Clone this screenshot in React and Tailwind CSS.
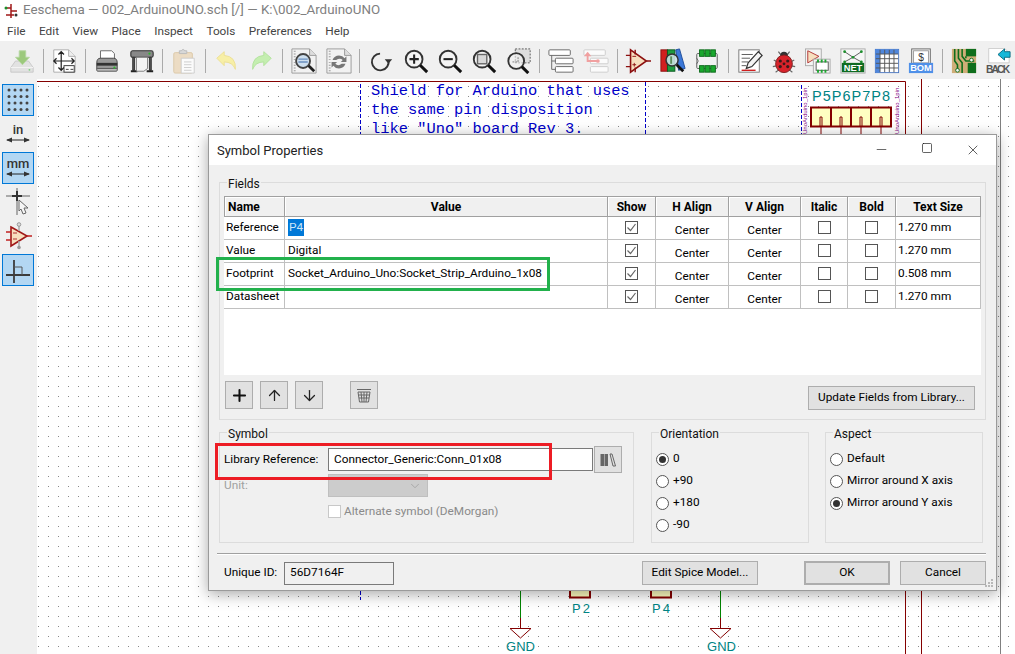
import { Minus, Square, X, Plus, ArrowUp, ArrowDown, ChevronDown } from 'lucide-react';

const ui = "font-['Roboto','Noto_Sans',sans-serif]";

const Svg = ({ children }) => (
  <svg width="28" height="28" viewBox="0 0 28 28" fill="none">{children}</svg>
);

const SaveIcon = () => (
  <Svg>
    <path d="M2 21 L7 14 H21 L26 21 V26 H2 Z" fill="#e2e2e2" stroke="#c8c8c8" />
    <path d="M2 21 H26" stroke="#f4f4f4" />
    <circle cx="22" cy="23.5" r="1" fill="#7fd07f" />
    <path d="M11 3 H18 V10 H22 L14.5 18 L7 10 H11 Z" fill="#9cc97c" stroke="#b5d6a0" />
  </Svg>
);
const PageIcon = () => (
  <Svg>
    <path d="M3 2 H19 L26 9 V26 H3 Z" fill="#fff" stroke="#aaa" />
    <path d="M19 2 V9 H26" fill="#eee" stroke="#aaa" />
    <path d="M11 4 V24 M3 14 H25 M8 7 L11 4 L14 7 M8 21 L11 24 L14 21 M6 11 L3 14 L6 17 M22 11 L25 14 L22 17" stroke="#222" strokeWidth="1.3" />
    <rect x="14" y="19" width="11" height="7" fill="#fff" stroke="#333" />
    <path d="M16 23 H19 M21 23 H24" stroke="#333" />
  </Svg>
);
const PrintIcon = () => (
  <Svg>
    <path d="M7 3 H19 L22 6 V12 H7 Z" fill="#fff" stroke="#666" />
    <path d="M3 16 Q3 11 7 11 H21 Q25 11 25 16 V23 H3 Z" fill="#9a9a9a" stroke="#444" />
    <rect x="3" y="16" width="22" height="3" fill="#333" />
    <rect x="3" y="22" width="22" height="3" rx="1" fill="#bbb" stroke="#555" />
    <circle cx="22" cy="21" r="1.2" fill="#2fb52f" />
  </Svg>
);
const PlotIcon = () => (
  <Svg>
    <rect x="2" y="3" width="24" height="7" rx="2" fill="#888" stroke="#333" strokeWidth="1.2" />
    <circle cx="22" cy="6" r="1.2" fill="#2fb52f" />
    <path d="M4 10 H6 V24 H4 Z M22 10 H24 V24 H22 Z" fill="#555" stroke="#333" />
    <path d="M2 25 H9 M19 25 H26" stroke="#222" strokeWidth="2" />
    <path d="M8 10 H20 V22 L16 25 H8 Z" fill="#f4f4f4" stroke="#777" />
  </Svg>
);
const PasteIcon = () => (
  <Svg>
    <rect x="3" y="5" width="20" height="22" rx="1.5" fill="#ecdcc4" stroke="#dcc8a8" />
    <path d="M9 6 V3 H11 Q13 0 15 3 H17 V6 Z" fill="#d8d8d8" stroke="#bbb" />
    <path d="M11 11 H25 V27 H11 Z" fill="#fbfbfb" stroke="#ccc" />
    <path d="M14 15 H22 M14 18 H22 M14 21 H22 M14 24 H22" stroke="#ccc" />
  </Svg>
);
const UndoIcon = () => (
  <Svg>
    <path d="M3 11 L11 4 V8 Q24 9 23 23 Q20 15 11 15 V19 Z" fill="#f7efa6" stroke="#ecdf95" />
  </Svg>
);
const RedoIcon = () => (
  <Svg>
    <path d="M25 11 L17 4 V8 Q4 9 5 23 Q8 15 17 15 V19 Z" fill="#c4eeb0" stroke="#b2e29c" />
  </Svg>
);
const DocBg = () => (
  <>
    <path d="M1 1 H20 L27 8 V27 H1 Z" fill="#f2f2f2" stroke="#999" />
    <path d="M4 3 V25" stroke="#999" strokeDasharray="1 2" strokeWidth="2" />
    <path d="M20 1 V8 H27" fill="#ddd" stroke="#999" />
  </>
);
const FindDocIcon = () => (
  <Svg>
    <DocBg />
    <circle cx="13" cy="14" r="7.5" fill="#cfe0ef" stroke="#444" strokeWidth="2" />
    <path d="M8 12 H18 M8 15 H18" stroke="#6b8fc0" strokeWidth="1.5" />
    <path d="M19 19 L25 25" stroke="#222" strokeWidth="3" />
  </Svg>
);
const RefreshDocIcon = () => (
  <Svg>
    <DocBg />
    <path d="M7 13 Q9 8 14 8 Q18 8 20 11 L22 9 V15 H16 L18 13 Q15 10 11 13 Z" fill="#777" />
    <path d="M21 17 Q19 22 14 22 Q10 22 8 19 L6 21 V15 H12 L10 17 Q13 20 17 17 Z" fill="#777" />
  </Svg>
);
const RotateIcon = () => (
  <Svg>
    <path d="M22 13 A9 9 0 1 1 13 6" stroke="#333" strokeWidth="2" />
    <path d="M18 12 H26 L22 17 Z" fill="#333" />
  </Svg>
);
const Lens = ({ children }) => (
  <Svg>
    <circle cx="12" cy="12" r="9" fill="#f4f4f4" stroke="#333" strokeWidth="2" />
    {children}
    <path d="M18.5 18.5 L26 26" stroke="#111" strokeWidth="3.2" />
  </Svg>
);
const ZoomInIcon = () => <Lens><path d="M7 12 H17 M12 7 V17" stroke="#222" strokeWidth="2.2" /></Lens>;
const ZoomOutIcon = () => <Lens><path d="M7 12 H17" stroke="#222" strokeWidth="2.2" /></Lens>;
const ZoomFitIcon = () => <Lens><rect x="7" y="7" width="10" height="10" fill="#d8d8d8" stroke="#666" strokeWidth="1.5" /></Lens>;
const ZoomAreaIcon = () => (
  <Svg>
    <rect x="10" y="1" width="16" height="15" fill="#ddd" stroke="#555" strokeDasharray="2 1.5" />
    <circle cx="11" cy="14" r="8.5" fill="#f2f2f2" fillOpacity="0.6" stroke="#333" strokeWidth="2" />
    <path d="M7 15 H13 V10" stroke="#777" strokeDasharray="2 1" />
    <path d="M17 20 L24 27" stroke="#111" strokeWidth="3.2" />
  </Svg>
);
const HierIcon = () => (
  <Svg>
    <rect x="1" y="2" width="23" height="6" rx="1" fill="#fff" stroke="#666" />
    <rect x="8" y="11" width="19" height="6" rx="1" fill="#fff" stroke="#666" />
    <rect x="8" y="20" width="19" height="6" rx="1" fill="#fff" stroke="#666" />
    <path d="M4 8 V23 H8 M4 14 H8" stroke="#666" />
  </Svg>
);
const LeaveIcon = () => (
  <Svg>
    <rect x="1" y="2" width="23" height="6" rx="1" fill="#fbfbfb" stroke="#ccc" />
    <rect x="8" y="11" width="19" height="6" rx="1" fill="#fbfbfb" stroke="#ccc" />
    <rect x="8" y="20" width="19" height="6" rx="1" fill="#fbfbfb" stroke="#ccc" />
    <path d="M5 7 V14 H15" stroke="#f0a0a0" strokeWidth="2" />
    <path d="M1 9 L5 4 L9 9 Z" fill="#f0a0a0" />
    <circle cx="16" cy="14" r="2" fill="#f0a0a0" />
  </Svg>
);
const OpampIcon = () => (
  <Svg>
    <path d="M6 2 L23 14 L6 26 Z" fill="#f7dfbf" stroke="#8c1010" strokeWidth="1.7" />
    <path d="M1 8 H6 M1 20 H6 M23 14 H28 M11 7 V2 M11 21 V26" stroke="#8c1010" strokeWidth="1.5" />
    <path d="M8 9 H12 M8 18 H12 M10 16 V20" stroke="#8c1010" />
  </Svg>
);
const LibIcon = () => (
  <Svg>
    <rect x="1" y="2" width="7" height="23" fill="#d11f1f" stroke="#8c1010" />
    <rect x="8" y="2" width="8" height="23" fill="#1e9c3e" stroke="#0b5a1f" />
    <path d="M17 2 L21 1 L27 22 L20 24 Z" fill="#3b78d8" stroke="#1d4b99" />
    <circle cx="13" cy="13" r="6.5" fill="#d7e6ef" fillOpacity="0.85" stroke="#333" strokeWidth="1.6" />
    <path d="M12 9 V17" stroke="#5c8d5c" strokeWidth="2" />
    <path d="M18 18 L25 25" stroke="#111" strokeWidth="3" />
  </Svg>
);
const FpIcon = () => (
  <Svg>
    <rect x="3" y="6" width="22" height="16" rx="1" fill="#f2f2f2" stroke="#555" />
    <path d="M3 11 Q6 14 3 17" fill="#f0f0f0" stroke="#555" />
    <rect x="6" y="2" width="5" height="7" fill="#1aa82e" stroke="#0c6a1a" />
    <rect x="12" y="2" width="5" height="7" fill="#1aa82e" stroke="#0c6a1a" />
    <rect x="18" y="2" width="5" height="7" fill="#1aa82e" stroke="#0c6a1a" />
    <rect x="6" y="19" width="5" height="7" fill="#1aa82e" stroke="#0c6a1a" />
    <rect x="12" y="19" width="5" height="7" fill="#1aa82e" stroke="#0c6a1a" />
    <rect x="18" y="19" width="5" height="7" fill="#1aa82e" stroke="#0c6a1a" />
  </Svg>
);
const AnnotIcon = () => (
  <Svg>
    <rect x="2" y="2" width="22" height="24" fill="#fff" stroke="#777" />
    <path d="M5 7 H17 M5 11 H14 M5 15 H12 M5 19 H10" stroke="#555" />
    <path d="M5 24 H20" stroke="#d02020" strokeWidth="1.5" />
    <path d="M10 22 L12 16 L23 4 L27 8 L16 20 Z" fill="#f4f4f4" stroke="#333" strokeWidth="1.3" />
  </Svg>
);
const BugIcon = () => (
  <Svg>
    <path d="M8 4 L11 8 M20 4 L17 8 M3 13 L7 15 M25 13 L21 15 M2 20 L7 19 M26 20 L21 19 M5 26 L9 23 M23 26 L19 23" stroke="#666" strokeWidth="1.3" />
    <circle cx="14" cy="8" r="4" fill="#333" />
    <ellipse cx="14" cy="17" rx="9" ry="9.5" fill="#d8222a" stroke="#7c2020" />
    <circle cx="10" cy="14" r="1.7" fill="#3a1a1a" />
    <circle cx="18" cy="14" r="1.7" fill="#3a1a1a" />
    <circle cx="10" cy="20" r="1.7" fill="#3a1a1a" />
    <circle cx="18" cy="20" r="1.7" fill="#3a1a1a" />
    <circle cx="14" cy="17" r="1.5" fill="#3a1a1a" />
  </Svg>
);
const SymFpIcon = () => (
  <Svg>
    <rect x="0.5" y="1" width="17" height="18" fill="#f4f4f4" stroke="#aaa" />
    <path d="M3 3 L15 9 L3 16 Z" fill="#f7dfbf" stroke="#b03030" />
    <rect x="9" y="12" width="18" height="15" fill="#f4f4f4" stroke="#aaa" />
    <rect x="12" y="15" width="13" height="9" fill="#fff" stroke="#555" />
    <path d="M13 14 H15 M17 14 H19 M21 14 H23 M13 25 H15 M17 25 H19 M21 25 H23" stroke="#1aa82e" strokeWidth="3" />
  </Svg>
);
const NetIcon = () => (
  <Svg>
    <rect x="1" y="1" width="26" height="26" fill="#f6f6f6" stroke="#aaa" />
    <path d="M5 4 L14 10 L23 4 M5 15 L14 10 L23 15" stroke="#555" />
    <circle cx="5" cy="4" r="1.5" fill="#1c8f2c" />
    <circle cx="23" cy="4" r="1.5" fill="#1c8f2c" />
    <circle cx="14" cy="10" r="1.5" fill="#1c8f2c" />
    <circle cx="5" cy="15" r="1.5" fill="#1c8f2c" />
    <circle cx="23" cy="15" r="1.5" fill="#1c8f2c" />
    <rect x="2" y="16" width="24" height="10" fill="#0f6b22" />
    <text x="14" y="25" textAnchor="middle" fontSize="10" fontWeight="700" fill="#fff" fontFamily="Liberation Sans">NET</text>
  </Svg>
);
const GridIcon = () => (
  <Svg>
    <rect x="1.5" y="1.5" width="25" height="25" fill="#fff" stroke="#4a76c0" />
    <rect x="1.5" y="1.5" width="25" height="5" fill="#4f86dc" />
    <rect x="1.5" y="1.5" width="5" height="25" fill="#4f86dc" />
    <path d="M6.5 2 V26 M11.5 2 V26 M16.5 2 V26 M21.5 2 V26 M2 6.5 H26 M2 11.5 H26 M2 16.5 H26 M2 21.5 H26" stroke="#555" />
  </Svg>
);
const BomIcon = () => (
  <Svg>
    <rect x="4" y="1" width="20" height="17" fill="#f4f4f4" stroke="#666" />
    <rect x="6" y="3" width="16" height="13" fill="#fff" stroke="#999" />
    <text x="14" y="14" textAnchor="middle" fontSize="11" fill="#333" fontFamily="Liberation Sans">$</text>
    <rect x="1" y="16" width="26" height="11" fill="#4f90e8" />
    <text x="14" y="25" textAnchor="middle" fontSize="10" fontWeight="700" fill="#fff" fontFamily="Liberation Sans">BOM</text>
  </Svg>
);
const PcbIcon = () => (
  <Svg>
    <rect x="1" y="1" width="26" height="26" fill="#cfae78" />
    <rect x="16" y="1" width="11" height="8" fill="#0f6e1c" />
    <rect x="18" y="16" width="9" height="11" fill="#0f6e1c" />
    <path d="M4 1 V14 L7 18 V23 M8 1 V11 L12 16 V27 M12 1 V9 L16 14 H25 M16 9 V11" stroke="#0f6e1c" strokeWidth="1.7" />
    <circle cx="7" cy="24" r="2" fill="#f4f4f4" stroke="#0f6e1c" />
    <circle cx="22" cy="13" r="2" fill="#f4f4f4" stroke="#0f6e1c" />
  </Svg>
);
const BackIcon = () => (
  <Svg>
    <path d="M4 0.5 H21 L26 5 V16 H4 Z" fill="#fff" stroke="#ccc" />
    <path d="M14 7 L21 1 V4 H27 V10 H21 V13 Z" fill="#16b8d8" stroke="#0a6a80" />
    <text x="1" y="27" textLength="26" fontSize="11" fontWeight="700" fill="#555" fontFamily="Liberation Sans">BACK</text>
  </Svg>
);

const Tool = ({ children }) => (
  <div className="w-[34.3px] h-[28px] flex items-center justify-center shrink-0">
    <div className="scale-[0.93]">{children}</div>
  </div>
);
const Sep = () => (
  <div className="w-[8.5px] flex justify-center shrink-0">
    <div className="w-px h-[24px] bg-[#aaaaaa]" />
  </div>
);

const TopToolbar = () => (
  <div className="h-[38px] bg-[#f0f0f0] flex items-center pl-[4.5px] pt-[2px]">
    <Tool><SaveIcon /></Tool><Sep />
    <Tool><PageIcon /></Tool><Sep />
    <Tool><PrintIcon /></Tool><Tool><PlotIcon /></Tool><Sep />
    <Tool><PasteIcon /></Tool><Sep />
    <Tool><UndoIcon /></Tool><Tool><RedoIcon /></Tool><Sep />
    <Tool><FindDocIcon /></Tool><Tool><RefreshDocIcon /></Tool><Sep />
    <Tool><RotateIcon /></Tool><Tool><ZoomInIcon /></Tool><Tool><ZoomOutIcon /></Tool><Tool><ZoomFitIcon /></Tool><Tool><ZoomAreaIcon /></Tool><Sep />
    <Tool><HierIcon /></Tool><Tool><LeaveIcon /></Tool><Sep />
    <Tool><OpampIcon /></Tool><Tool><LibIcon /></Tool><Tool><FpIcon /></Tool><Sep />
    <Tool><AnnotIcon /></Tool><Tool><BugIcon /></Tool><Tool><SymFpIcon /></Tool><Tool><NetIcon /></Tool><Tool><GridIcon /></Tool><Tool><BomIcon /></Tool><Sep />
    <Tool><PcbIcon /></Tool><Tool><BackIcon /></Tool>
  </div>
);

const SideBtn = ({ active, children }) => (
  <div className={active
    ? 'w-8 h-8 flex items-center justify-center bg-[#b3d7f3] border border-[#0078d7]'
    : 'w-8 h-8 flex items-center justify-center'}>
    {children}
  </div>
);

const UnitGlyph = ({ label }) => (
  <svg className="overflow-visible" width="28" height="24" viewBox="0 0 28 24">
    <text x="14" y="12" textAnchor="middle" fontSize="13" fontWeight="500" fill="#333" fontFamily="Roboto">{label}</text>
    <path d="M3 18 H25" stroke="#222" />
    <path d="M2 18 L8 15.5 V20.5 Z M26 18 L20 15.5 V20.5 Z" fill="#333" />
  </svg>
);

const LeftToolbar = () => (
  <div className="w-[37px] bg-[#f0f0f0] flex flex-col gap-0.5 pl-[2px] pt-[5px] shrink-0">
    <SideBtn active>
      <svg width="24" height="24" viewBox="0 0 24 24" fill="#444">
        {[2, 8.5, 15, 21.5].map((y) =>
          [3, 9, 15, 21].map((x) => <circle key={`${x}-${y}`} cx={x} cy={y} r="1.5" />)
        )}
      </svg>
    </SideBtn>
    <SideBtn><UnitGlyph label="in" /></SideBtn>
    <SideBtn active><UnitGlyph label="mm" /></SideBtn>
    <SideBtn>
      <svg width="28" height="30" viewBox="0 0 28 30">
        <path d="M2 9 H26 M13 1 V28" stroke="#aaa" strokeWidth="2" />
        <path d="M8 9 H18 M13 4 V14" stroke="#333" strokeWidth="2" />
        <path d="M15 13 L24 21 L20 21 L22 26 L19 27 L17 22 L15 24 Z" fill="#f6f6f6" stroke="#666" />
      </svg>
    </SideBtn>
    <SideBtn>
      <svg width="28" height="28" viewBox="0 0 28 28">
        <path d="M7 5 L23 14 L7 24 Z" fill="#f7dfbf" stroke="#a01818" strokeWidth="1.6" />
        <path d="M2 10 H7 M2 18 H7 M23 14 H28" stroke="#c02020" strokeWidth="1.5" />
        <path d="M15 3 V9 M15 19 V25" stroke="#aaa" strokeWidth="1.5" />
        <circle cx="15" cy="2.5" r="1.8" fill="#ddd" stroke="#999" />
        <circle cx="15" cy="25.5" r="1.8" fill="#999" />
        <path d="M9 11 H13 M9 17 H13" stroke="#b03030" />
      </svg>
    </SideBtn>
    <SideBtn active>
      <svg width="26" height="26" viewBox="0 0 26 26" fill="none">
        <path d="M1 18 H25 M9 3 V26" stroke="#3c3c3c" strokeWidth="1.8" />
        <path d="M9 10 H17 V18" stroke="#555" />
      </svg>
    </SideBtn>
  </div>
);

const Schematic = () => {
  const maroon = '#840000';
  const teal = '#008484';
  return (
    <svg className="absolute inset-0" width="978" height="575" viewBox="37 79 978 575" fill="none">
      <path d="M37 81.5 H905.5 V135 M905.5 591 V654 M921.5 79 V135 M921.5 591 V654" stroke={maroon} />
      <path d="M1000.5 79 V654" stroke="#808080" />
      <path d="M360.5 84 V135 M360.5 591 V600 M645.5 82 V135 M801.5 85 V135" stroke="#0000c8" strokeDasharray="4 2" />
      <g fontFamily="Liberation Mono" fontSize="15.4" fill="#0000c8">
        <text x="371" y="95">Shield for Arduino that uses</text>
        <text x="371" y="114">the same pin disposition</text>
        <text x="371" y="133">like "Uno" board Rev 3.</text>
      </g>
      <text x="812" y="101" fontFamily="Liberation Sans" fontSize="14.5" fill={teal} textLength="78">P5P6P7P8</text>
      <rect x="811" y="107.5" width="80" height="19" fill="#ffffc2" stroke={maroon} strokeWidth="2" />
      <path d="M831 107 V127 M851 107 V127 M871 107 V127" stroke={maroon} strokeWidth="2" />
      <path d="M820 127 V117 H822 V127 M840 127 V117 H842 V127 M860 127 V117 H862 V127 M880 127 V117 H882 V127" stroke={maroon} />
      <path d="M821 127 V135 M841 127 V135 M861 127 V135 M881 127 V135" stroke={maroon} />
      <g fontFamily="Liberation Sans" fontSize="6" fill="#840084">
        <text transform="translate(807 134) rotate(-90)">UnoArduino_1pin</text>
        <text transform="translate(899 134) rotate(-90)">UnoArduino_1pin</text>
      </g>
      <rect x="570" y="588" width="20" height="9.5" fill="#ffffc2" stroke={maroon} strokeWidth="2" />
      <rect x="651" y="588" width="20" height="9.5" fill="#ffffc2" stroke={maroon} strokeWidth="2" />
      <g fontFamily="Liberation Sans" fontSize="13" fill={teal}>
        <text x="572" y="613" textLength="18">P2</text>
        <text x="652" y="613" textLength="18">P4</text>
        <text x="506" y="651" textLength="29">GND</text>
        <text x="707" y="651" textLength="29">GND</text>
      </g>
      <path d="M520.5 591 V618 M720.5 591 V618" stroke="#008400" />
      <path d="M520.5 618 V628 M720.5 618 V628 M510 628.5 H531 L520.5 638 Z M710 628.5 H731 L720.5 638 Z" stroke={maroon} />
    </svg>
  );
};

const Check = ({ on }) => (
  <div className="w-[13px] h-[13px] bg-white border border-[#555] flex items-center justify-center">
    {on && (
      <svg width="11" height="11" viewBox="0 0 11 11" fill="none">
        <path d="M1.5 5.5 L4.5 8.5 L9.5 2" stroke="#666" strokeWidth="1.2" />
      </svg>
    )}
  </div>
);

const Hd = ({ children, className = '' }) => (
  <div className={`flex items-center justify-center font-bold text-[12px] text-black bg-[#f0f0f0] border-r border-t border-b border-[#a0a0a0] shadow-[inset_1px_1px_0_#fff] ${className}`}>
    {children}
  </div>
);

const Txt = ({ children, className = '' }) => (
  <div className={`flex items-start pt-[2px] border-r border-b border-[#c0c0c0] text-[11.8px] leading-[17px] whitespace-nowrap ${className}`}>
    {children}
  </div>
);
const Mid = ({ children }) => (
  <div className="flex justify-center items-center border-r border-b border-[#c0c0c0]">
    <div className="-mt-px">{children}</div>
  </div>
);
const Ctr = () => (
  <div className="flex justify-center items-end border-r border-b border-[#c0c0c0] text-[11.8px] leading-[17px]">Center</div>
);

const rows = [
  { name: 'Reference', value: <span className="bg-[#0078d7] text-[#cde6f7] px-px">P4</span>, size: '1.270 mm' },
  { name: 'Value', value: 'Digital', size: '1.270 mm' },
  { name: 'Footprint', value: 'Socket_Arduino_Uno:Socket_Strip_Arduino_1x08', size: '0.508 mm' },
  { name: 'Datasheet', value: '', size: '1.270 mm' },
];

const FieldsGrid = () => (
  <div className="w-[757px] h-[179px] bg-white">
    <div className="grid grid-cols-[61px_323px_48px_73px_72px_47px_48px_85px] grid-rows-[21px_23px_23px_23px_23px]">
      <Hd className="border-l justify-start pl-[3px]">Name</Hd>
      <Hd>Value</Hd>
      <Hd>Show</Hd>
      <Hd>H Align</Hd>
      <Hd>V Align</Hd>
      <Hd>Italic</Hd>
      <Hd>Bold</Hd>
      <Hd>Text Size</Hd>
      {rows.map((r) => (
        <div key={r.name} className="contents">
          <Txt className="pl-[2px]">{r.name}</Txt>
          <Txt className="pl-[3px]">{r.value}</Txt>
          <Mid><Check on /></Mid>
          <Ctr />
          <Ctr />
          <Mid><Check /></Mid>
          <Mid><Check /></Mid>
          <Txt className="pl-[2px]">{r.size}</Txt>
        </div>
      ))}
    </div>
  </div>
);

const Btn = ({ children, className = '' }) => (
  <div className={`flex items-center justify-center bg-[#e1e1e1] border border-[#adadad] text-[11.8px] text-black whitespace-nowrap ${className}`}>
    {children}
  </div>
);

const Group = ({ label, className = '', children }) => (
  <fieldset className={`border border-[#dcdcdc] ${className}`}>
    <legend className="ml-[3px] px-[1px] text-[12px] leading-[15px] text-[#111]">
      <span className="relative top-[2px]">{label}</span>
    </legend>
    {children}
  </fieldset>
);

const Radio = ({ on, label }) => (
  <div className="h-[22px] flex items-center gap-[4px] text-[11.8px]">
    <div className="w-[13px] h-[13px] rounded-full bg-white border border-[#555] flex items-center justify-center">
      {on && <div className="w-[7px] h-[7px] rounded-full bg-[#333]" />}
    </div>
    <span>{label}</span>
  </div>
);

const Dialog = () => (
  <div className={`absolute left-[208px] top-[134px] w-[789px] h-[457px] border border-[#9a9a9a] bg-[#f0f0f0] shadow-[0_3px_14px_rgba(0,0,0,0.35)] flex flex-col text-black ${ui}`}>
    <div className="h-[30px] bg-white flex items-center justify-between shrink-0">
      <span className="pl-[8px] pt-px text-[13px] text-[#222]">Symbol Properties</span>
      <div className="flex">
        <div className="w-[46px] flex justify-center"><Minus size={15} strokeWidth={1} color="#111" /></div>
        <div className="w-[46px] flex justify-center"><Square size={12} strokeWidth={1.3} color="#111" /></div>
        <div className="w-[46px] flex justify-center"><X size={16} strokeWidth={1} color="#111" /></div>
      </div>
    </div>

    <div className="pl-[10px] pr-[10px] flex flex-col">
      <Group label="Fields" className="mt-[10px] h-[245px] pl-[4px] pt-[6px]">
        <FieldsGrid />
        <div className="flex items-start mt-[6px]">
          <Btn className="ml-px w-[28px] h-[28px]"><Plus size={19} strokeWidth={2.6} color="#111" /></Btn>
          <Btn className="ml-[7px] w-[28px] h-[28px]"><ArrowUp size={17} strokeWidth={1.8} color="#222" /></Btn>
          <Btn className="ml-[7px] w-[28px] h-[28px]"><ArrowDown size={17} strokeWidth={1.8} color="#222" /></Btn>
          <Btn className="ml-[27px] w-[28px] h-[28px]">
            <svg width="16" height="16" viewBox="0 0 16 16" fill="none" stroke="#666">
              <path d="M1 2.5 H15 M2 5 H14 L12.5 15 H3.5 Z M5 5 L6 15 M8 5 V15 M11 5 L10 15 M2.5 8 H13.5 M3 11 H13" />
            </svg>
          </Btn>
          <Btn className="ml-auto mt-[5px] mr-[10px] w-[167px] h-[24px]">Update Fields from Library...</Btn>
        </div>
      </Group>

      <div className="flex mt-[5px] h-[118px]">
        <Group label="Symbol" className="w-[415px] pl-[4px] pt-[6px]">
          <div className="flex items-center h-[27px] text-[11.8px]">
            <span className="w-[104px]">Library Reference:</span>
            <div className="w-[265px] h-[23px] bg-white border border-[#7a7a7a] flex items-center pl-[5px]">Connector_Generic:Conn_01x08</div>
            <Btn className="ml-px w-[28px] h-[27px]">
              <svg width="16" height="14" viewBox="0 0 16 14" fill="#666">
                <rect x="0.5" y="1" width="3.5" height="12" />
                <rect x="4.5" y="1" width="3.5" height="12" />
                <path d="M10 1 L12 1 L15.5 13 L13 13 Z" fill="none" stroke="#666" />
              </svg>
            </Btn>
          </div>
          <div className="flex items-center mt-px text-[11.8px] text-[#a0a0a0]">
            <span className="w-[104px]">Unit:</span>
            <div className="w-[100px] h-[23px] bg-[#cccccc] border border-[#bfbfbf] flex items-center justify-end pr-[5px]">
              <ChevronDown size={14} strokeWidth={1.2} color="#9a9a9a" />
            </div>
          </div>
          <div className="flex items-center gap-[3px] ml-[104px] mt-[6px] text-[11.8px] text-[#8a8a8a]">
            <div className="w-[13px] h-[13px] bg-white border border-[#c8c8c8]" />
            <span>Alternate symbol (DeMorgan)</span>
          </div>
        </Group>
        <Group label="Orientation" className="ml-[17px] w-[158px] pl-[4px] pt-[8px]">
          <Radio on label="0" />
          <Radio label="+90" />
          <Radio label="+180" />
          <Radio label="-90" />
        </Group>
        <Group label="Aspect" className="ml-[16px] w-[158px] pl-[4px] pt-[8px]">
          <Radio label="Default" />
          <Radio label="Mirror around X axis" />
          <Radio on label="Mirror around Y axis" />
        </Group>
      </div>

      <div className="mt-[10px] -ml-[2px] h-px bg-[#a0a0a0] shadow-[0_1px_0_#fff]" />

      <div className="flex items-center mt-[7px] pl-[5px] text-[11.8px]">
        <span className="w-[60px]">Unique ID:</span>
        <div className="w-[110px] h-[23px] border border-[#7a7a7a] flex items-center pl-[5px]">56D7164F</div>
        <Btn className="ml-auto w-[116px] h-[24px]">Edit Spice Model...</Btn>
        <Btn className="ml-[46px] w-[86px] h-[24px] border-2 border-[#0078d7]">OK</Btn>
        <Btn className="ml-[10px] w-[86px] h-[24px]">Cancel</Btn>
      </div>
    </div>

    <div className="absolute left-[7px] top-[122px] w-[334px] h-[34px] border-[3px] border-[#22b14c]" />
    <div className="absolute left-[6px] top-[308px] w-[337px] h-[37px] border-[3px] border-[#ed1c24]" />
    <svg className="absolute right-[2px] bottom-[2px]" width="9" height="9" viewBox="0 0 9 9" fill="#b8b8b8">
      <rect x="6" y="0" width="2" height="2" />
      <rect x="3" y="3" width="2" height="2" />
      <rect x="6" y="3" width="2" height="2" />
      <rect x="0" y="6" width="2" height="2" />
      <rect x="3" y="6" width="2" height="2" />
      <rect x="6" y="6" width="2" height="2" />
    </svg>
  </div>
);

export default function App() {
  return (
    <div className={`relative w-[1015px] h-[654px] overflow-hidden bg-white flex flex-col ${ui}`}>
      <div className="h-[21px] flex items-center shrink-0 pl-[3px]">
        <svg width="16" height="16" viewBox="0 0 16 16" fill="none">
          <path d="M8 1 V15 M3 5 H8 M8 8 H14 M3 12 H11" stroke="#a01818" strokeWidth="1.5" />
          <circle cx="3" cy="5" r="1.5" fill="#1c8f2c" />
          <circle cx="13" cy="12" r="1.5" fill="#333" />
        </svg>
        <span className="ml-[4px] text-[13.35px] text-[#808080]">Eeschema — 002_ArduinoUNO.sch [/] — K:\002_ArduinoUNO</span>
      </div>
      <div className="h-[20px] flex items-center gap-[13.5px] pl-[7px] pt-[2px] text-[11.8px] text-[#444] shrink-0">
        <span>File</span>
        <span>Edit</span>
        <span>View</span>
        <span>Place</span>
        <span>Inspect</span>
        <span>Tools</span>
        <span>Preferences</span>
        <span>Help</span>
      </div>
      <TopToolbar />
      <div className="flex flex-1 min-h-0">
        <LeftToolbar />
        <div className="relative flex-1 bg-white bg-[radial-gradient(circle_at_1.5px_1.5px,#888_0.7px,transparent_1px)] bg-[size:10px_10px] bg-[position:0px_6px]">
          <Schematic />
        </div>
      </div>
      <Dialog />
    </div>
  );
}
